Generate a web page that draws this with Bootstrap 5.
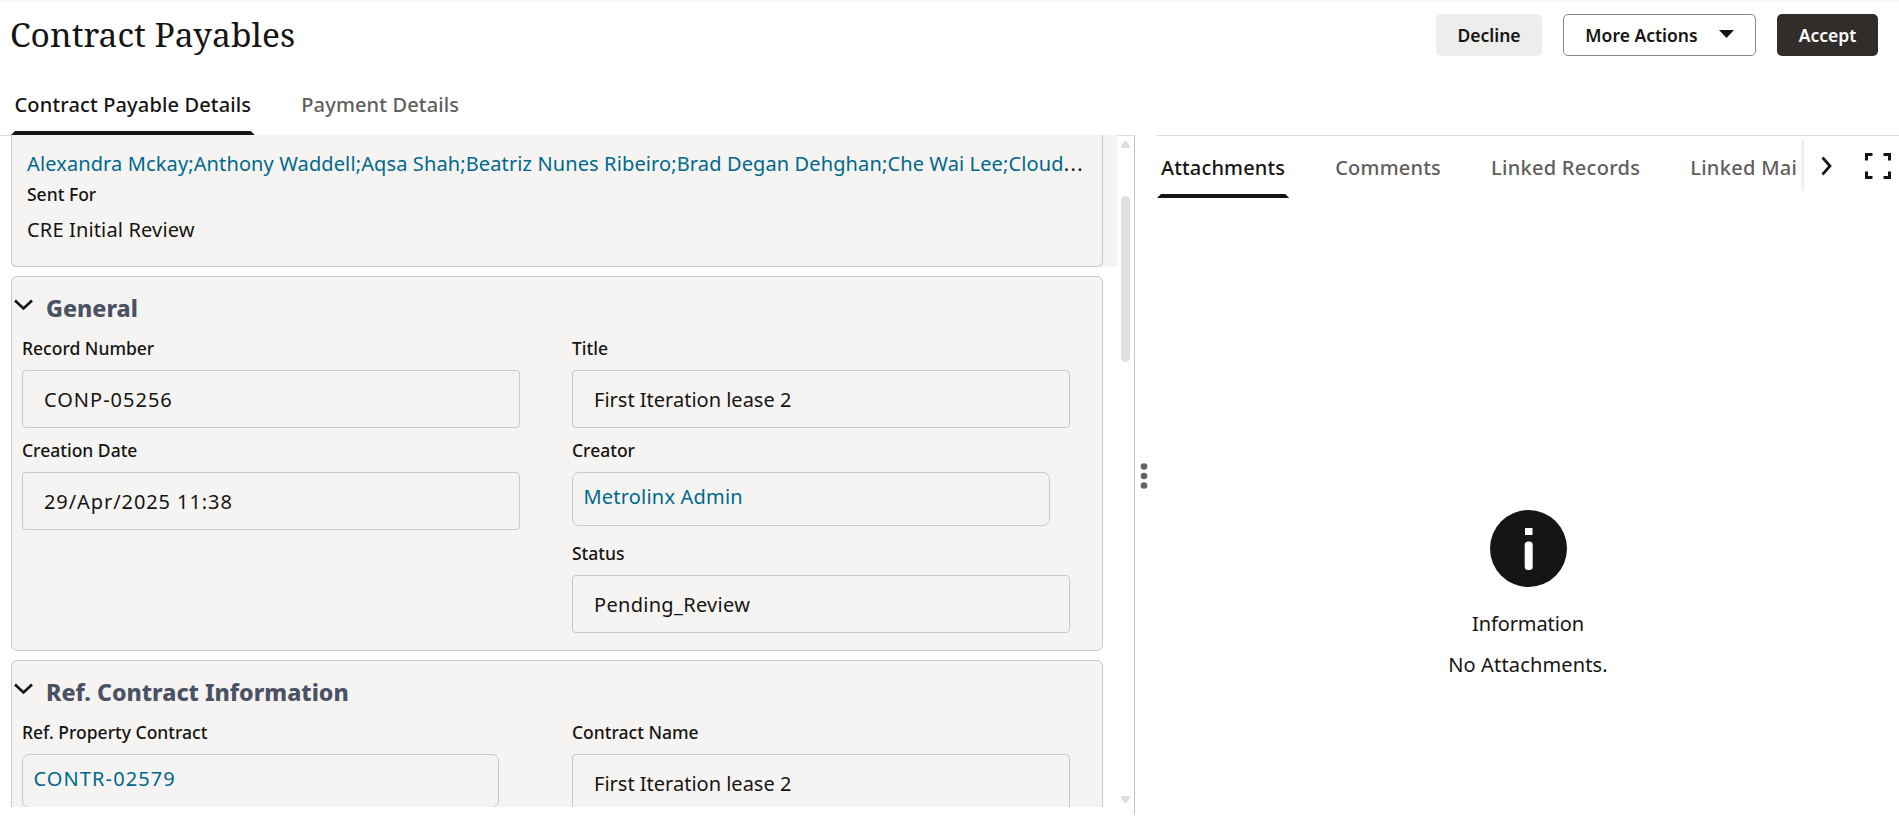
<!DOCTYPE html>
<html lang="en">
<head>
<meta charset="utf-8">
<meta name="viewport" content="width=device-width, initial-scale=1">
<title>Contract Payables</title>
<link href="https://cdn.jsdelivr.net/npm/bootstrap@5.3.0/dist/css/bootstrap.min.css" rel="stylesheet">
<style>
  :root { --ink: #161513; --muted: #5f5e5c; --link: #00688c; --panel: #f5f4f2; --line: #c9c9c8; }
  body { height: 822px; overflow: hidden; background: #fff; color: var(--ink); font: 400 20px/30px "Noto Sans", "Open Sans", sans-serif; letter-spacing: .15px; border-top: 2px solid #f8f8f8; }
  svg { display: block; flex: none; }
  .page-head { height: 78px; padding: 12px 21px 0 11px; }
  .page-title { font: 400 33.6px/40px "Noto Serif", "Liberation Serif", serif; letter-spacing: 0; margin: 0 0 0 -1px; }
  .action { height: 42px; padding: 0; font-size: 17.5px; line-height: 20px; font-weight: 600; letter-spacing: 0; border-radius: 5px; color: var(--ink); }
  .action-decline { width: 106px; background: #ededeb; }
  .action-more { width: 193px; border: 1px solid #8b8988; }
  .action-accept { width: 101px; background: #312d2a; color: #fff; }
  .tab { color: var(--muted); font-weight: 500; white-space: nowrap; letter-spacing: .2px; }
  .tab.current { color: var(--ink); }
  .bar { height: 4px; background: var(--ink); clip-path: polygon(0 100%, 4px 0, calc(100% - 4px) 0, 100% 100%); }
  .page-tabs { height: 55px; padding-left: 11px; gap: 43px; }
  .page-tabs .tab { padding: 10px 3.500px 0; height: 51px; line-height: 30px; letter-spacing: .15px; }
  .work { height: 687px; }
  .left-pane { width: 1134px; height: 672px; overflow: hidden; }
  .edge { width: 11px; height: 1px; background: #dcdbda; }
  .records { width: 1107px; }
  .summary-bg { background: var(--panel); margin-bottom: 9px; }
  .sheet { width: 1092px; background: var(--panel); border: 1px solid var(--line); border-radius: 6px; }
  .sheet-summary { height: 132px; border-top: 0; border-radius: 0 0 6px 6px; padding: 14px 15px 0; }
  .sheet-general { height: 375px; margin-bottom: 9px; }
  .sheet-ref { height: 170px; }
  .sheet-head { height: 62px; padding-left: 1.500px; }
  .sheet-head h2 { font-size: 23.2px; line-height: 30px; font-weight: 800; color: #4a5264; margin: 0 0 0 13.500px; letter-spacing: 0; }
  .fields { display: grid; grid-template-columns: 498px 498px; column-gap: 52px; row-gap: 13.4px; padding-left: 10px; }
  .field { height: 89px; }
  .caption { font-size: 17.5px; line-height: 19px; font-weight: 500; letter-spacing: 0; }
  .field .caption { margin-bottom: 12px; }
  .value { height: 58px; border: 1px solid var(--line); border-radius: 4px; padding: 2px 0 0 21px; }
  .value.linked { height: 54px; width: 478px; border-radius: 7px; padding: 0 0 4px 10.500px; }
  .link-text { color: var(--link); text-decoration: none; }
  .digits { letter-spacing: 1px; }
  .scroller { width: 15px; padding-top: 5px; border-top: 1px solid #dcdbda; }
  .thumb { width: 9px; height: 166px; border-radius: 5px; background: #e0dfde; margin-top: 48px; }
  .splitter { width: 23px; height: 680px; border-left: 1px solid #c4c4c4; padding: 2px 0 0 5px; }
  .right-pane { border-top: 1px solid #dcdbda; min-width: 0; }
  .side-tabs { width: 641px; height: 62px; gap: 42px; overflow: hidden; }
  .side-tabs .tab { padding: 17px 4px 0; height: 58px; }
  .side-more { width: 95px; height: 54px; margin-top: 2px; padding-left: 17px; box-shadow: -2px 0 4px -1px rgba(0,0,0,.14); clip-path: inset(0 0 0 -8px); }
  .empty-state { margin-top: 312px; }
</style>
</head>
<body>
<header class="page-head d-flex justify-content-between align-items-start">
  <h1 class="page-title">Contract Payables</h1>
  <div class="d-flex" style="gap:21px">
    <button class="btn action action-decline border-0">Decline</button>
    <button class="btn action action-more d-flex align-items-center justify-content-center">More Actions
      <svg width="15" height="8" viewBox="0 0 15 8" style="margin:-3px 0 0 21px"><path d="M0 0h15L7.5 8z" fill="#161513"/></svg>
    </button>
    <button class="btn action action-accept border-0">Accept</button>
  </div>
</header>
<nav class="page-tabs d-flex">
  <div><div class="tab current">Contract Payable Details</div><div class="bar"></div></div>
  <div><div class="tab">Payment Details</div></div>
</nav>
<main class="work d-flex">
  <section class="left-pane d-flex">
    <div class="edge"></div>
    <div class="records">
      <div class="summary-bg">
        <div class="sheet sheet-summary">
          <div class="text-nowrap" style="letter-spacing:.12px"><a class="link-text">Alexandra Mckay;Anthony Waddell;Aqsa Shah;Beatriz Nunes Ribeiro;Brad Degan Dehghan;Che Wai Lee;Cloud</a><span style="letter-spacing:1.4px">...</span></div>
          <div class="caption" style="margin-top:6px">Sent For</div>
          <div style="margin-top:11px">CRE Initial Review</div>
        </div>
      </div>
      <div class="sheet sheet-general">
        <div class="sheet-head d-flex align-items-center">
          <svg width="19" height="12" viewBox="0 0 19 12" style="margin-top:-6px"><path d="M1 1.500l8.500 8 8.500-8" fill="none" stroke="#161513" stroke-width="2.700"/></svg>
          <h2>General</h2>
        </div>
        <div class="fields">
          <div class="field"><div class="caption">Record Number</div><div class="value d-flex align-items-center digits">CONP-05256</div></div>
          <div class="field"><div class="caption">Title</div><div class="value d-flex align-items-center" style="letter-spacing:0">First Iteration lease 2</div></div>
          <div class="field"><div class="caption">Creation Date</div><div class="value d-flex align-items-center" style="letter-spacing:.92px;padding-top:1px">29/Apr/2025 11:38</div></div>
          <div class="field"><div class="caption">Creator</div><div class="value linked d-flex align-items-center" style="letter-spacing:.2px"><a class="link-text">Metrolinx Admin</a></div></div>
          <div></div>
          <div class="field"><div class="caption">Status</div><div class="value d-flex align-items-center" style="letter-spacing:.3px">Pending_Review</div></div>
        </div>
      </div>
      <div class="sheet sheet-ref">
        <div class="sheet-head d-flex align-items-center">
          <svg width="19" height="12" viewBox="0 0 19 12" style="margin-top:-6px"><path d="M1 1.500l8.500 8 8.500-8" fill="none" stroke="#161513" stroke-width="2.700"/></svg>
          <h2>Ref. Contract Information</h2>
        </div>
        <div class="fields">
          <div class="field"><div class="caption">Ref. Property Contract</div><div class="value linked d-flex align-items-center" style="width:477px;letter-spacing:1.1px"><a class="link-text">CONTR-02579</a></div></div>
          <div class="field"><div class="caption">Contract Name</div><div class="value d-flex align-items-center" style="letter-spacing:0">First Iteration lease 2</div></div>
        </div>
      </div>
    </div>
    <div class="scroller d-flex flex-column align-items-center">
      <svg width="9" height="7" viewBox="0 0 9 7"><path d="M3.500 0h2L9 5.500V7H0V5.500z" fill="#e0dfde"/></svg>
      <div class="thumb"></div>
      <svg class="mt-auto" width="9" height="7" viewBox="0 0 9 7" style="margin-bottom:4px"><path d="M0 0h9v1.500L5.500 7h-2L0 1.500z" fill="#e0dfde"/></svg>
    </div>
  </section>
  <div class="splitter d-flex align-items-center">
    <svg width="8" height="28" viewBox="0 0 8 28"><g fill="#656463"><circle cx="4" cy="4.500" r="3.300"/><circle cx="4" cy="14" r="3.300"/><circle cx="4" cy="23.500" r="3.300"/></g></svg>
  </div>
  <section class="right-pane flex-grow-1">
    <div class="d-flex">
      <div class="side-tabs d-flex">
        <div><div class="tab current" style="letter-spacing:.15px">Attachments</div><div class="bar"></div></div>
        <div><div class="tab">Comments</div></div>
        <div><div class="tab" style="letter-spacing:.28px">Linked Records</div></div>
        <div><div class="tab" style="letter-spacing:.3px">Linked Mail</div></div>
      </div>
      <div class="side-more d-flex align-items-center" style="margin-left:6px;padding-top:2px">
        <svg width="11" height="20" viewBox="0 0 11 20"><path d="M1.500 1.500l7.500 8.500-7.500 8.500" fill="none" stroke="#161513" stroke-width="2.700"/></svg>
        <svg width="28" height="28" viewBox="0 0 28 28" style="margin-left:32px"><path d="M2.500 8.500v-6h6M19.500 2.500h6v6M25.500 19.500v6h-6M8.500 25.500h-6v-6" fill="none" stroke="#161513" stroke-width="3"/></svg>
      </div>
    </div>
    <div class="empty-state d-flex flex-column align-items-center">
      <svg width="77" height="77" viewBox="0 0 77 77"><circle cx="38.500" cy="38.500" r="38.500" fill="#161513"/><path d="M35 18h7.500v7H35z" fill="#fff"/><rect x="34.700" y="31.500" width="8" height="28.500" rx="3.500" fill="#fff"/></svg>
      <div style="margin-top:22px;letter-spacing:-.1px">Information</div>
      <div style="margin-top:11px">No Attachments.</div>
    </div>
  </section>
</main>
<script src="https://cdn.jsdelivr.net/npm/bootstrap@5.3.0/dist/js/bootstrap.bundle.min.js"></script>
</body>
</html>
